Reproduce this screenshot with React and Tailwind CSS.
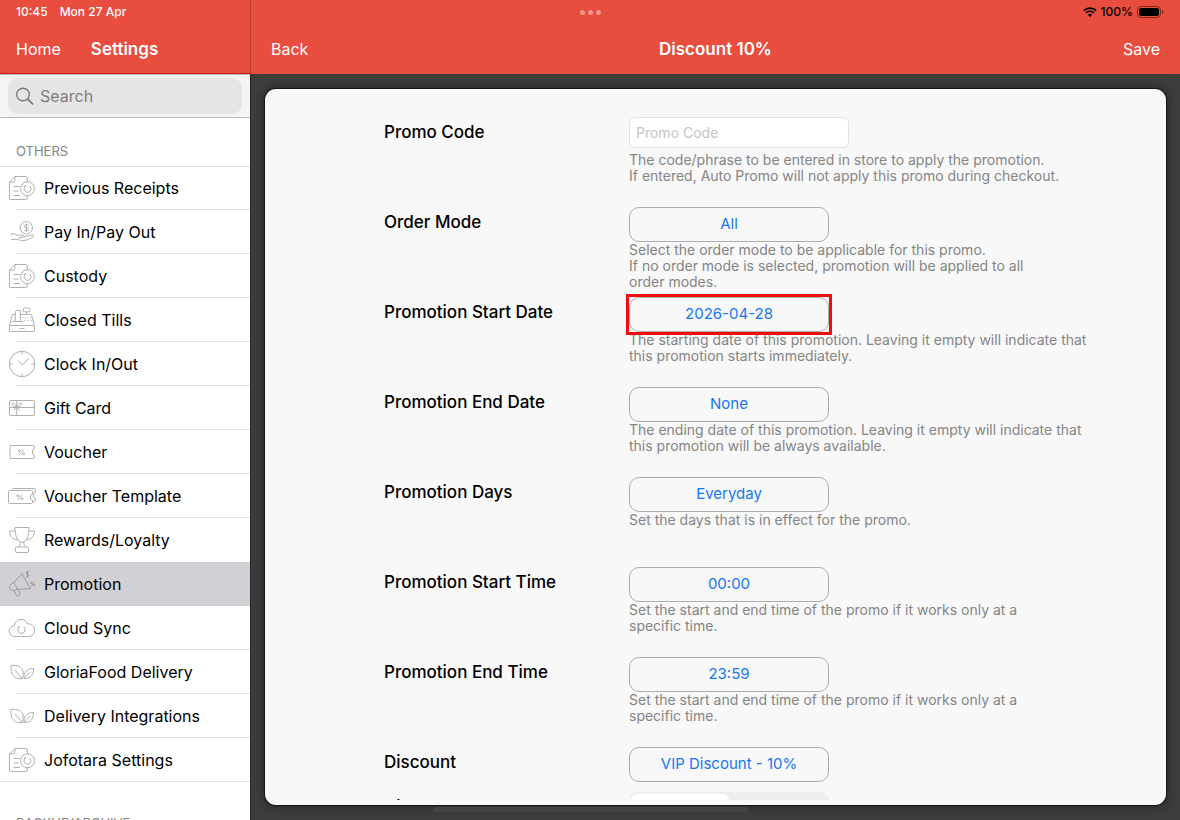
import { useState } from 'react';

const ReceiptIcon = () => (
  <>
    <path d="M19.3 7.500V4a1.500 1.500 0 0 0-1.500-1.500H7L1.500 8v16A1.500 1.500 0 0 0 3 25.500h14.800a1.500 1.500 0 0 0 1.500-1.500v-2M7 2.500V6.500A1.500 1.500 0 0 1 5.500 8h-4" />
    <path d="M5.500 12.500h6M5.500 17h5M5.500 21.500h6.500" />
    <circle cx="19.500" cy="14.700" r="7" />
    <path d="M17.300 12.300a3.400 3.400 0 1 0 4.200-.2M17.500 11v1.500h-1.700" />
  </>
);

const PayIcon = () => (
  <>
    <circle cx="18.300" cy="9.700" r="6.200" />
    <path d="M20.500 7.800c-.4-.8-1.200-1.100-2.200-1.100-1.200 0-2.200.5-2.200 1.500s1 1.300 2.200 1.500 2.300.5 2.300 1.600-1 1.500-2.300 1.500c-1.100 0-2-.4-2.300-1.200M18.300 5.500v8.400" />
    <path d="M2.300 16.500c2-1.200 4-.8 5.500 0 1.300.7 2.500.8 4 .7h2.700c1.600 0 1.700 2 0 2.100l-4 .2M15.800 18.700l8-1.700c2-.3 3 1.200 1.200 2-3 1.500-6 3.400-9.500 3.600-3.500 0-5-1.300-7.500-1.400-1.800 0-3 .5-5 .4" />
  </>
);

const TillIcon = () => (
  <>
    <rect x="1.500" y="19.500" width="25" height="6" rx="1" />
    <path d="M1.500 20 4 9.500a1 1 0 0 1 1-1h2.300M12.300 8.500h10.200a1.200 1.200 0 0 1 1.200 1l2.600 10.500M11.500 22.500h5" />
    <path d="M7.300 15.500V5.500l1.200-1h3.800v11zM4 15.500h11" />
    <rect x="15.300" y="2" width="6.500" height="3.800" rx=".6" />
    <path d="M18.500 5.800v2.700M15.500 11.500h1M19 11.500h1M22 11.500h1M16 14.500h1M19.500 14.500h1M22.500 14.500h1" />
  </>
);

const ClockIcon = () => (
  <>
    <circle cx="14" cy="14" r="12.700" />
    <path d="M14 1.300v3.500M14 23.200v3.500M1.300 14h3.500M23.200 14h3.500M10.300 10.700l3.900 4.300L21 8.500" />
  </>
);

const GiftIcon = () => (
  <>
    <rect x="1.500" y="6.500" width="25" height="15" rx="1.500" />
    <path d="M1.500 13.500h25M8.700 6.500v15M8.700 12.500c-1.500-3.500-4.500-4.500-4.700-2.500-.2 1.800 2 2.700 4.700 2.500 2.700.2 5-.7 4.700-2.500-.3-2-3.200-1-4.700 2.500l-3 4M8.700 12.500l3 4" />
  </>
);

const Percent = () => (
  <>
    <path d="m15.400 11.700-4 5" />
    <circle cx="11.300" cy="12.700" r="1" />
    <circle cx="15.500" cy="15.700" r="1" />
  </>
);

const VoucherIcon = () => (
  <>
    <path d="M3 7.500h22.500a1 1 0 0 1 1 1v2.300l-2 1.400v3.600l2 1.400v2.300a1 1 0 0 1-1 1H3a1 1 0 0 1-1-1v-11a1 1 0 0 1 1-1z" />
    <Percent />
  </>
);

const TemplateIcon = () => (
  <>
    <path d="M1.500 8.500h22a1 1 0 0 1 1 1v2.300l-2 1.400v3.600l2 1.400v2.300a1 1 0 0 1-1 1h-22a1 1 0 0 1-1-1v-11a1 1 0 0 1 1-1z" />
    <path d="M4.300 8.500v-1a1 1 0 0 1 1-1h21a1 1 0 0 1 1 1v3l-2 1.300v3.200l2 1.300v2.200a1 1 0 0 1-1 1h-1.800" />
    <g transform="translate(-1.500 1)">
      <Percent />
    </g>
  </>
);

const TrophyIcon = () => (
  <>
    <path d="M7 1.500h14c0 7-1.500 12-5 14.500h-4C8.500 13.500 7 8.500 7 1.500z" />
    <path d="M7.200 5H1.500c0 5 3 8.500 8 9M20.800 5h5.700c0 5-3 8.500-8 9M12.300 16c.3 2.200-.8 3.500-2 4.800M15.700 16c-.3 2.200.8 3.500 2 4.800" />
    <rect x="7.500" y="21" width="13" height="5.500" rx="1.200" />
  </>
);

const PromotionIcon = () => (
  <>
    <path d="M14 3.500 22.300 18.500 9.500 19.300 6 12.300zM6 12.300l-3.200 2.200c-2 1.600-1.700 4.400 0 5.500 1.600 1 4.400.3 6.700-.7" />
    <path d="M6 20.500l2.500 5c.8 1.500 4 0 3.300-1.700L10.300 19.500" />
    <path d="M20.800 2.400c-.8-.8-2.700-.5-2.500.8.2 1.200 2.400.8 2.600 2 .1 1.300-1.900 1.600-2.800.7M19.500.5v7M26.500 11.500l-3.500 5" />
    <circle cx="23.300" cy="12.800" r=".7" />
    <circle cx="26.200" cy="15.300" r=".7" />
  </>
);

const CloudIcon = () => (
  <>
    <path d="M7 22.500a5.500 5.500 0 0 1-.6-11C7 7.800 9.800 5.400 13.200 5.400c3 0 5.300 1.800 6.300 4.500 4-.3 7.100 2.500 7.100 6.300 0 3.500-2.600 6.300-6.200 6.300z" />
    <path d="M10.700 13.300a3.700 3.700 0 1 0 5-.6M11.200 11.800v1.700H9.500" />
  </>
);

const LeavesIcon = () => (
  <>
    <path d="M3 7.500c6-.7 11.500 1 12.200 6.500.3 2.500-.5 5-1 6.500-3 .6-6 .3-8.200-1.800C3 16 2.800 11.500 3 7.500zM7 12l7 8.500" />
    <path d="M25.500 10.500c.2 6-2.500 10.500-9.500 10 -.7-6.500 3.500-10 9.500-10zM22 14l-6 6.500" />
  </>
);

const MENU = [
  { label: 'Previous Receipts', Icon: ReceiptIcon },
  { label: 'Pay In/Pay Out', Icon: PayIcon },
  { label: 'Custody', Icon: ReceiptIcon },
  { label: 'Closed Tills', Icon: TillIcon },
  { label: 'Clock In/Out', Icon: ClockIcon },
  { label: 'Gift Card', Icon: GiftIcon },
  { label: 'Voucher', Icon: VoucherIcon },
  { label: 'Voucher Template', Icon: TemplateIcon },
  { label: 'Rewards/Loyalty', Icon: TrophyIcon },
  { label: 'Promotion', Icon: PromotionIcon },
  { label: 'Cloud Sync', Icon: CloudIcon },
  { label: 'GloriaFood Delivery', Icon: LeavesIcon },
  { label: 'Delivery Integrations', Icon: LeavesIcon },
  { label: 'Jofotara Settings', Icon: ReceiptIcon },
];

const FIELDS = [
  {
    id: 'mode',
    label: 'Order Mode',
    value: 'All',
    help: 'Select the order mode to be applicable for this promo.\nIf no order mode is selected, promotion will be applied to all\norder modes.',
  },
  {
    id: 'start-date',
    label: 'Promotion Start Date',
    value: '2026-04-28',
    marked: true,
    help: 'The starting date of this promotion. Leaving it empty will indicate that\nthis promotion starts immediately.',
  },
  {
    id: 'end-date',
    label: 'Promotion End Date',
    value: 'None',
    help: 'The ending date of this promotion. Leaving it empty will indicate that\nthis promotion will be always available.',
  },
  { id: 'days', label: 'Promotion Days', value: 'Everyday', help: 'Set the days that is in effect for the promo.' },
  {
    id: 'start-time',
    label: 'Promotion Start Time',
    value: '00:00',
    help: 'Set the start and end time of the promo if it works only at a\nspecific time.',
  },
  {
    id: 'end-time',
    label: 'Promotion End Time',
    value: '23:59',
    help: 'Set the start and end time of the promo if it works only at a\nspecific time.',
  },
];

function StatusBar() {
  return (
    <div className="grid h-6 grid-cols-[1fr_auto_1fr] items-center px-4 text-xs font-medium">
      <div className="flex gap-3">
        <span>10:45</span>
        <span>Mon 27 Apr</span>
      </div>
      <div className="flex gap-[3px]">
        <i className="size-[5px] rounded-full bg-white/40" />
        <i className="size-[5px] rounded-full bg-white/40" />
        <i className="size-[5px] rounded-full bg-white/40" />
      </div>
      <div className="flex items-center justify-end gap-1 text-black">
        <svg viewBox="0 0 14 10" className="h-[10px] w-[14px]" fill="none" stroke="currentColor" strokeWidth="1.700">
          <path d="M.8 3.600a8.800 8.800 0 0 1 12.400 0M3 5.900a5.700 5.700 0 0 1 8 0" />
          <path d="M4.900 7.700a3 3 0 0 1 4.200 0L7 9.900z" fill="currentColor" stroke="none" />
        </svg>
        <span>100%</span>
        <svg viewBox="0 0 27 12" className="h-3 w-[27px]">
          <rect x=".5" y=".5" width="23" height="11" rx="3.500" fill="none" stroke="#000" strokeOpacity=".45" />
          <rect x="2" y="2" width="20" height="8" rx="2" />
          <path d="M25 4v4c.8-.3 1.400-1.100 1.400-2S25.800 4.300 25 4z" fillOpacity=".5" />
        </svg>
      </div>
    </div>
  );
}

function Sidebar() {
  const [active, setActive] = useState('Promotion');
  const activeIndex = MENU.findIndex((m) => m.label === active);

  return (
    <aside className="flex w-[251px] shrink-0 flex-col overflow-hidden border-r border-[#292929] bg-white">
      <div className="border-y border-[#b9b9b9] bg-[#f4f4f4] px-2 py-[3px]">
        <label className="flex h-9 items-center gap-1.5 rounded-[10px] bg-[#e5e5e5] px-2 text-[#7d7d7d]">
          <svg viewBox="0 0 18 18" className="size-[18px] shrink-0" fill="none" stroke="currentColor" strokeWidth="1.400">
            <circle cx="7" cy="7.500" r="6.300" />
            <path d="m11.700 12 4.800 4.800" strokeLinecap="round" strokeWidth="1.800" />
          </svg>
          <input
            type="search"
            aria-label="Search"
            placeholder="Search"
            className="min-w-0 flex-1 bg-transparent text-base outline-none placeholder:text-[#7d7d7d]"
          />
        </label>
      </div>

      <h2 className="border-b border-[#e0e0e0] px-4 pt-6 pb-1.5 text-[13px] leading-[18px] text-[#858585]">OTHERS</h2>
      <ul className="-mt-px">
        {MENU.map(({ label, Icon }, i) => {
          const last = i === MENU.length - 1;
          const bare = i === activeIndex || i === activeIndex - 1;
          return (
            <li key={label} className={i === activeIndex ? 'bg-[#d1d0d5]' : ''}>
              <button type="button" onClick={() => setActive(label)} className="flex h-11 w-full flex-col text-left">
                <span className="flex flex-1 items-center gap-2 pl-2">
                  <svg
                    viewBox="0 0 28 28"
                    className={`size-7 shrink-0 ${i === activeIndex ? 'text-[#999999]' : 'text-[#b0b0b0]'}`}
                    fill="none"
                    stroke="currentColor"
                    strokeLinejoin="round"
                  >
                    <Icon />
                  </svg>
                  <span className="text-base text-black">{label}</span>
                </span>
                <span className={`h-px self-stretch ${bare ? '' : 'bg-[#e0e0e0]'} ${last ? '' : 'ml-4'}`} />
              </button>
            </li>
          );
        })}
      </ul>
      <h2 className="px-4 pt-8 text-[13px] leading-[18px] whitespace-nowrap text-[#858585]">BACKUP/ARCHIVE</h2>
    </aside>
  );
}

function Row({ label, htmlFor, children, help }) {
  return (
    <div className="grid h-[90px] grid-cols-[245px_1fr]">
      <label htmlFor={htmlFor} className="pt-[3px] text-[17px] leading-6 font-medium text-black">
        {label}
      </label>
      <div className="flex flex-col items-start">
        {children}
        {help && <p className="text-sm leading-4 whitespace-pre-line text-[#858585]">{help}</p>}
      </div>
    </div>
  );
}

function PickerButton({ id, marked, children }) {
  return (
    <div className="relative">
      <button
        id={id}
        type="button"
        className="block h-[35px] w-[200px] rounded-[10px] border border-[#adadad] text-[15px] text-[#1677f2]"
      >
        {children}
      </button>
      {marked && <span className="pointer-events-none absolute -inset-[3px] border-[3px] border-[#f00d0d]" />}
    </div>
  );
}

export default function App() {
  const [code, setCode] = useState('');
  const [kind, setKind] = useState('percentage');

  return (
    <div className="flex h-screen flex-col overflow-hidden bg-[#3c3c3c] font-[Inter,'Liberation_Sans',sans-serif]">
      <header className="relative bg-[#e84d3d] text-white">
        <StatusBar />
        <div className="flex h-[50px] items-stretch text-base">
          <div className="flex w-[251px] shrink-0 items-center gap-[30px] border-r border-b border-r-[#b63d31] border-b-[#cf1a12] pl-4">
            <button type="button">Home</button>
            <h1 className="text-[17px] leading-6 font-semibold">Settings</h1>
          </div>
          <div className="grid flex-1 grid-cols-[1fr_auto_1fr] items-center px-5">
            <button type="button" className="justify-self-start">
              Back
            </button>
            <h2 className="text-[17px] leading-6 font-semibold">Discount 10%</h2>
            <button type="button" className="justify-self-end">
              Save
            </button>
          </div>
        </div>
        <span className="absolute top-0 left-[250px] h-6 w-px bg-[#b63d31]" />
      </header>

      <div className="flex min-h-0 flex-1">
        <Sidebar />
        <main className="relative min-w-0 flex-1 px-[14px] py-[15px]">
          <div className="h-full overflow-hidden rounded-[11px] bg-[#f8f8f8] pb-[5px] shadow-[0_0_0_1px_#151515,0_0_8px_#1c1c1c]">
            <form className="h-full overflow-hidden pt-7 pr-10 pl-[119px]" onSubmit={(e) => e.preventDefault()}>
              <Row
                label="Promo Code"
                htmlFor="code"
                help={'The code/phrase to be entered in store to apply the promotion.\nIf entered, Auto Promo will not apply this promo during checkout.'}
              >
                <input
                  id="code"
                  value={code}
                  onChange={(e) => setCode(e.target.value)}
                  placeholder="Promo Code"
                  className="mb-1 h-[31px] w-[220px] rounded-md border border-[#e2e2e2] bg-white px-1.5 text-sm outline-none placeholder:text-[#c5c5c7]"
                />
              </Row>
              {FIELDS.map((f) => (
                <Row key={f.id} label={f.label} htmlFor={f.id} help={f.help}>
                  <PickerButton id={f.id} marked={f.marked}>
                    {f.value}
                  </PickerButton>
                </Row>
              ))}
              <div className="grid grid-cols-[245px_1fr]">
                <label htmlFor="discount" className="pt-[3px] text-[17px] leading-6 font-medium text-black">
                  Discount
                </label>
                <PickerButton id="discount">VIP Discount - 10%</PickerButton>
              </div>
              <div className="mt-2.5 grid grid-cols-[245px_1fr]">
                <span className="pt-[3px] text-[17px] leading-6 font-medium text-black">Discount Type</span>
                <div className="flex h-8 w-[200px] rounded-lg bg-[#eeeeef] p-0.5">
                  {['percentage', 'amount'].map((k) => (
                    <button
                      key={k}
                      type="button"
                      aria-label={k}
                      onClick={() => setKind(k)}
                      className={`flex-1 rounded-md ${kind === k ? 'bg-white' : ''}`}
                    />
                  ))}
                </div>
              </div>
            </form>
          </div>
          <span className="absolute bottom-2 left-[182px] h-[5px] w-[315px] rounded-full bg-[#434343]" />
        </main>
      </div>
    </div>
  );
}
